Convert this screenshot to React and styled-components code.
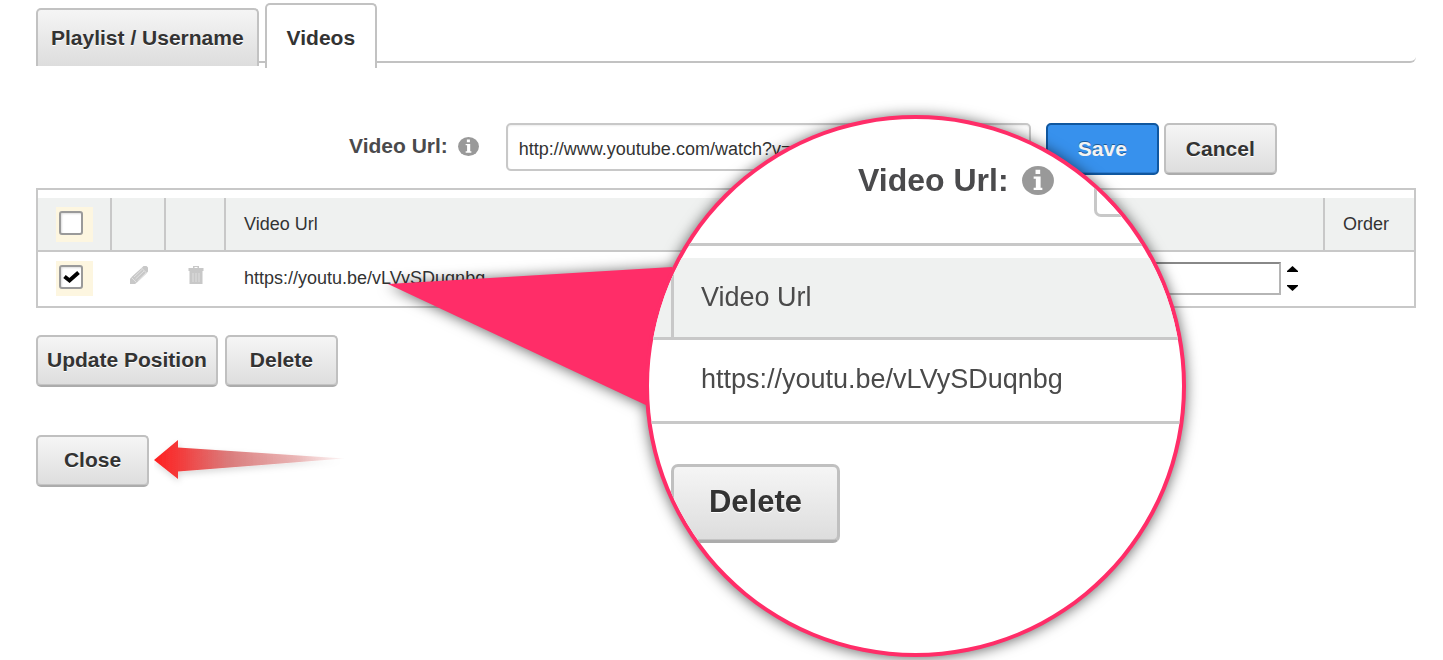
import React, { useState } from "react";
import styled, { createGlobalStyle, css } from "styled-components";

const line = "#c8c8c8";
const pink = "#ff2d68";

const GlobalStyle = createGlobalStyle`
  * { box-sizing: border-box; }
  body {
    margin: 0;
    background: #fff;
    color: #333;
    font-family: "Liberation Sans", Arial, sans-serif;
    font-size: 18px;
  }
  button, input { font-family: inherit; }
`;

const Page = styled.main`
  position: relative;
  min-height: 100vh;
  padding: 3px 27px 24px 36px;
  overflow: hidden;
`;

const TabBar = styled.nav`
  display: flex;
  align-items: flex-end;
  gap: 6px;
  height: 60px;
  border-bottom: 2px solid #c2c2c2;
  border-bottom-right-radius: 6px;
`;

const Tab = styled.button`
  flex: none;
  height: ${(p) => (p.$active ? 65 : 58)}px;
  margin-bottom: ${(p) => (p.$active ? -7 : -5)}px;
  padding: ${(p) => (p.$active ? "2px 20px 0" : "0 13px")};
  border: 2px solid #c2c2c2;
  border-bottom: 0;
  border-radius: 5px 5px 0 0;
  background: ${(p) => (p.$active ? "#fff" : "linear-gradient(#f5f5f5, #dddddd)")};
  color: #333;
  font-size: 21px;
  font-weight: 700;
  text-shadow: 0 1px #fff;
`;

const FormRow = styled.form`
  display: flex;
  align-items: flex-start;
  margin: 60px 0 13px;
  padding-left: 313px;
  button { padding-bottom: 0; }
`;

const FieldLabel = styled.label`
  display: flex;
  flex: none;
  align-items: center;
  gap: ${(p) => (p.$large ? 13 : 10)}px;
  height: ${(p) => (p.$large ? 70 : 46)}px;
  margin-right: ${(p) => (p.$large ? 40 : 27)}px;
  color: #4a4a4c;
  font-size: ${(p) => (p.$large ? 32 : 21)}px;
  font-weight: 700;
`;

const UrlInput = styled.input`
  flex: 0 1 525px;
  min-width: 0;
  height: 48px;
  margin-right: 15px;
  padding: 4px 11px 0;
  border: 2px solid ${line};
  border-radius: 5px;
  outline: 0;
  color: #333;
  font-size: 18px;
  box-shadow: inset 0 1px 2px #eee;
`;

const primary = css`
  border-color: #10579f;
  background: #3791ed;
  box-shadow: inset 0 -1px #2a7bd0;
  color: #f3f3f3;
  text-shadow: 0 -1px #205a94;
`;

const large = css`
  width: 169px;
  height: 79px;
  padding-bottom: 4px;
  border-width: 3px;
  border-radius: 7px;
  font-size: 31px;
`;

const Button = styled.button`
  flex: none;
  min-width: 113px;
  height: 52px;
  padding: 0 9px 2px;
  border: 2px solid #c0c0c0;
  border-bottom-color: #acacac;
  border-radius: 5px;
  background: linear-gradient(#f5f5f5, #dddddd);
  box-shadow: inset 0 -1px #c4c4c4;
  color: #333;
  font-size: 21px;
  font-weight: 700;
  text-shadow: 0 1px #fff;
  ${(p) => p.$primary && primary}
  ${(p) => p.$large && large}
`;

const ButtonRow = styled.div`
  display: flex;
  align-items: center;
  gap: ${(p) => p.$gap}px;
  margin-top: ${(p) => p.$top}px;
`;

const TableFrame = styled.div`
  padding-top: 8px;
  border: 2px solid ${line};
`;

const Table = styled.table`
  width: 100%;
  border-spacing: 0;
  table-layout: fixed;
`;

const HeadCell = styled.th`
  width: ${(p) => (p.$width ? `${p.$width}px` : "auto")};
  height: 54px;
  padding: 0 0 0 18px;
  border-right: 2px solid ${line};
  border-bottom: 2px solid ${line};
  background: #eff1f0;
  font-weight: 400;
  text-align: left;
  &:last-child { border-right: 0; }
`;

const Cell = styled.td`
  height: 54px;
  padding: 0 0 1px 18px;
`;

const IconCell = styled.td`
  padding: 0 0 3px;
  text-align: center;
`;

const UrlLine = styled.div`
  display: flex;
  align-items: center;
  justify-content: space-between;
  padding-right: 26px;
`;

const IconButton = styled.button`
  display: inline-flex;
  padding: 0;
  border: 0;
  background: none;
  color: #c8c8c8;
`;

const TickLabel = styled.label`
  display: flex;
  position: relative;
  width: 37px;
  height: 35px;
  padding: 4px 3px;
  background: #fdf6e0;
  svg { position: absolute; top: 8px; left: 7px; }
`;

const TickBox = styled.input`
  appearance: none;
  width: 24px;
  height: 24px;
  margin: 0;
  border: 2px solid #9a9a9a;
  border-radius: 3px;
  background: #fff;
  box-shadow: inset 1px 1px 2px #ddd;
`;

const Position = styled.div`
  display: flex;
  align-items: center;
  gap: 6px;
`;

const PositionInput = styled.input`
  width: 140px;
  height: 33px;
  border: 2px solid #b5b5b5;
  border-top-color: #888;
  border-radius: 0;
  font-size: 18px;
`;

const Steps = styled.div`
  display: flex;
  flex-direction: column;
  justify-content: space-between;
  height: 27px;
  button { color: #000; }
`;

const Callout = styled.aside`
  position: absolute;
  top: 115px;
  left: 388px;
  display: flex;
  padding-left: 257px;
  filter: drop-shadow(0 1px 7px rgba(0, 0, 0, 0.6));
`;

const Pointer = styled.svg`
  position: absolute;
  top: 152px;
  left: 0;
`;

const Lens = styled.div`
  position: relative;
  width: 541px;
  height: 542px;
  padding-top: 26px;
  border: 4px solid ${pink};
  border-radius: 50%;
  background: #fff;
  overflow: hidden;
  color: #4a4a4a;
  font-size: 27px;
`;

const LensForm = styled.div`
  display: flex;
  padding-left: 209px;
  margin-bottom: 26px;
`;

const LensInput = styled.input`
  flex: 1;
  min-width: 0;
  height: 72px;
  border: 3px solid ${line};
  border-radius: 7px;
`;

const LensFrame = styled.div`
  margin-bottom: 40px;
  padding-top: 12px;
  border: solid ${line};
  border-width: 3px 0;
`;

const LensHead = styled.th`
  width: ${(p) => (p.$edge ? "25px" : "auto")};
  height: 82px;
  padding: 0 0 0 ${(p) => (p.$edge ? 0 : 27)}px;
  border-right: ${(p) => (p.$edge ? 3 : 0)}px solid ${line};
  border-bottom: 3px solid ${line};
  background: #eff1f0;
  font-weight: 400;
  text-align: left;
`;

const LensCell = styled.td`
  height: 81px;
  padding: 0 0 3px 27px;
`;

const LensActions = styled.div`
  padding-left: 22px;
`;

const InfoIcon = ({ width }) => (
  <svg width={width} height={Math.round(width * 0.91)} viewBox="0 0 22 20" aria-hidden="true">
    <ellipse cx="11" cy="10" rx="11" ry="10" fill="#999" />
    <path fill="#fff" d="M9.300 2.500h3.200v3H9.300zM8 7.300h4.800v7.700H14v1.500H8V15h1.500V8.800H8z" />
  </svg>
);

const PencilIcon = () => (
  <svg width="20" height="20" viewBox="0 0 20 20" aria-hidden="true">
    <path fill="currentColor" d="M13 2.500 14.500 1h3L19 2.500v4L17 9 8 17.500 6 19H1v-5l1.500-2z" />
    <path stroke="#e2e2e2" d="m5 12 8-7.500M6.500 14l8.500-8M8.500 16 17 8M12.500 3l5 5M2.500 12.500l5 5" fill="none" />
  </svg>
);

const TrashIcon = () => (
  <svg width="16" height="20" viewBox="0 0 16 20" aria-hidden="true">
    <path fill="currentColor" fillRule="evenodd" d="M5 1h6v2h4.500v3H.5V3H5zm1.500 1v1h3V2zM1.500 6h13v13h-13z" />
    <path stroke="#dedede" d="M5 8v9M8 8v9M11 8v9" />
  </svg>
);

const StepIcon = ({ down }) => (
  <svg width="12" height="7" viewBox="0 0 12 7" aria-hidden="true">
    <path fill="currentColor" d={down ? "M0 0h11v1L5.500 6 0 1z" : "M0 7h11V6L5.500 1 0 6z"} />
  </svg>
);

const Tick = ({ label, checked, onChange }) => (
  <TickLabel>
    <TickBox type="checkbox" aria-label={label} checked={checked} onChange={onChange} />
    {checked && (
      <svg width="17" height="15" viewBox="0 0 17 15" aria-hidden="true">
        <path d="m1.500 7.500 5 4L15.500 3.500" fill="none" stroke="#000" strokeWidth="4" />
      </svg>
    )}
  </TickLabel>
);

const RedArrow = () => (
  <svg width="196" height="52" viewBox="0 0 196 52" aria-hidden="true">
    <defs>
      <linearGradient id="fade">
        <stop offset="0" stopColor="#ff2020" />
        <stop offset="0.130" stopColor="#f43a3a" />
        <stop offset="0.400" stopColor="#d87070" stopOpacity="0.900" />
        <stop offset="0.750" stopColor="#e08a8a" stopOpacity="0.600" />
        <stop offset="1" stopColor="#e8a0a0" stopOpacity="0.100" />
      </linearGradient>
      <filter id="soft" x="-10%" y="-40%" width="120%" height="200%">
        <feDropShadow dx="1" dy="3" stdDeviation="3" floodOpacity="0.150" />
      </filter>
    </defs>
    <path d="M0 25 24 5v7.500L190 23.500 24 36.500V44z" fill="url(#fade)" filter="url(#soft)" />
  </svg>
);

export default function App() {
  const [tab, setTab] = useState("Videos");
  const [url, setUrl] = useState("http://www.youtube.com/watch?v=");
  const [position, setPosition] = useState("");
  const [all, setAll] = useState(false);
  const [picked, setPicked] = useState(true);
  const step = (by) => setPosition(String(Number(position) + by));

  return (
    <>
      <GlobalStyle />
      <Page>
        <TabBar>
          {["Playlist / Username", "Videos"].map((name) => (
            <Tab key={name} type="button" $active={tab === name} onClick={() => setTab(name)}>
              {name}
            </Tab>
          ))}
        </TabBar>

        <FormRow onSubmit={(e) => e.preventDefault()}>
          <FieldLabel htmlFor="video-url">
            Video Url: <InfoIcon width={21} />
          </FieldLabel>
          <UrlInput id="video-url" value={url} onChange={(e) => setUrl(e.target.value)} />
          <ButtonRow $gap={5} $top={0}>
            <Button $primary type="submit">Save</Button>
            <Button type="button">Cancel</Button>
          </ButtonRow>
        </FormRow>

        <TableFrame>
          <Table>
            <thead>
              <tr>
                <HeadCell $width={74}>
                  <Tick label="Select all videos" checked={all} onChange={() => setAll(!all)} />
                </HeadCell>
                <HeadCell $width={54} />
                <HeadCell $width={60} />
                <HeadCell>Video Url</HeadCell>
                <HeadCell $width={89}>Order</HeadCell>
              </tr>
            </thead>
            <tbody>
              <tr>
                <Cell>
                  <Tick label="Select video" checked={picked} onChange={() => setPicked(!picked)} />
                </Cell>
                <IconCell>
                  <IconButton type="button" aria-label="Edit"><PencilIcon /></IconButton>
                </IconCell>
                <IconCell>
                  <IconButton type="button" aria-label="Delete video"><TrashIcon /></IconButton>
                </IconCell>
                <Cell>
                  <UrlLine>
                    https://youtu.be/vLVySDuqnbg
                    <Position>
                      <PositionInput
                        aria-label="Position"
                        value={position}
                        onChange={(e) => setPosition(e.target.value)}
                      />
                      <Steps>
                        <IconButton type="button" aria-label="Move up" onClick={() => step(1)}>
                          <StepIcon />
                        </IconButton>
                        <IconButton type="button" aria-label="Move down" onClick={() => step(-1)}>
                          <StepIcon down />
                        </IconButton>
                      </Steps>
                    </Position>
                  </UrlLine>
                </Cell>
                <Cell />
              </tr>
            </tbody>
          </Table>
        </TableFrame>

        <ButtonRow $gap={7} $top={27}>
          <Button type="button">Update Position</Button>
          <Button type="button">Delete</Button>
        </ButtonRow>
        <ButtonRow $gap={5} $top={48}>
          <Button type="button">Close</Button>
          <RedArrow />
        </ButtonRow>

        <Callout>
          <Pointer width="290" height="140" viewBox="0 0 290 140" aria-hidden="true">
            <path fill={pink} d="M0 17 284 0 290 60 262 140z" />
          </Pointer>
          <Lens>
            <LensForm>
              <FieldLabel $large htmlFor="lens-url">
                Video Url: <InfoIcon width={32} />
              </FieldLabel>
              <LensInput id="lens-url" />
            </LensForm>
            <LensFrame>
              <Table>
                <thead>
                  <tr>
                    <LensHead $edge />
                    <LensHead>Video Url</LensHead>
                  </tr>
                </thead>
                <tbody>
                  <tr>
                    <td />
                    <LensCell>https://youtu.be/vLVySDuqnbg</LensCell>
                  </tr>
                </tbody>
              </Table>
            </LensFrame>
            <LensActions>
              <Button $large type="button">Delete</Button>
            </LensActions>
          </Lens>
        </Callout>
      </Page>
    </>
  );
}
